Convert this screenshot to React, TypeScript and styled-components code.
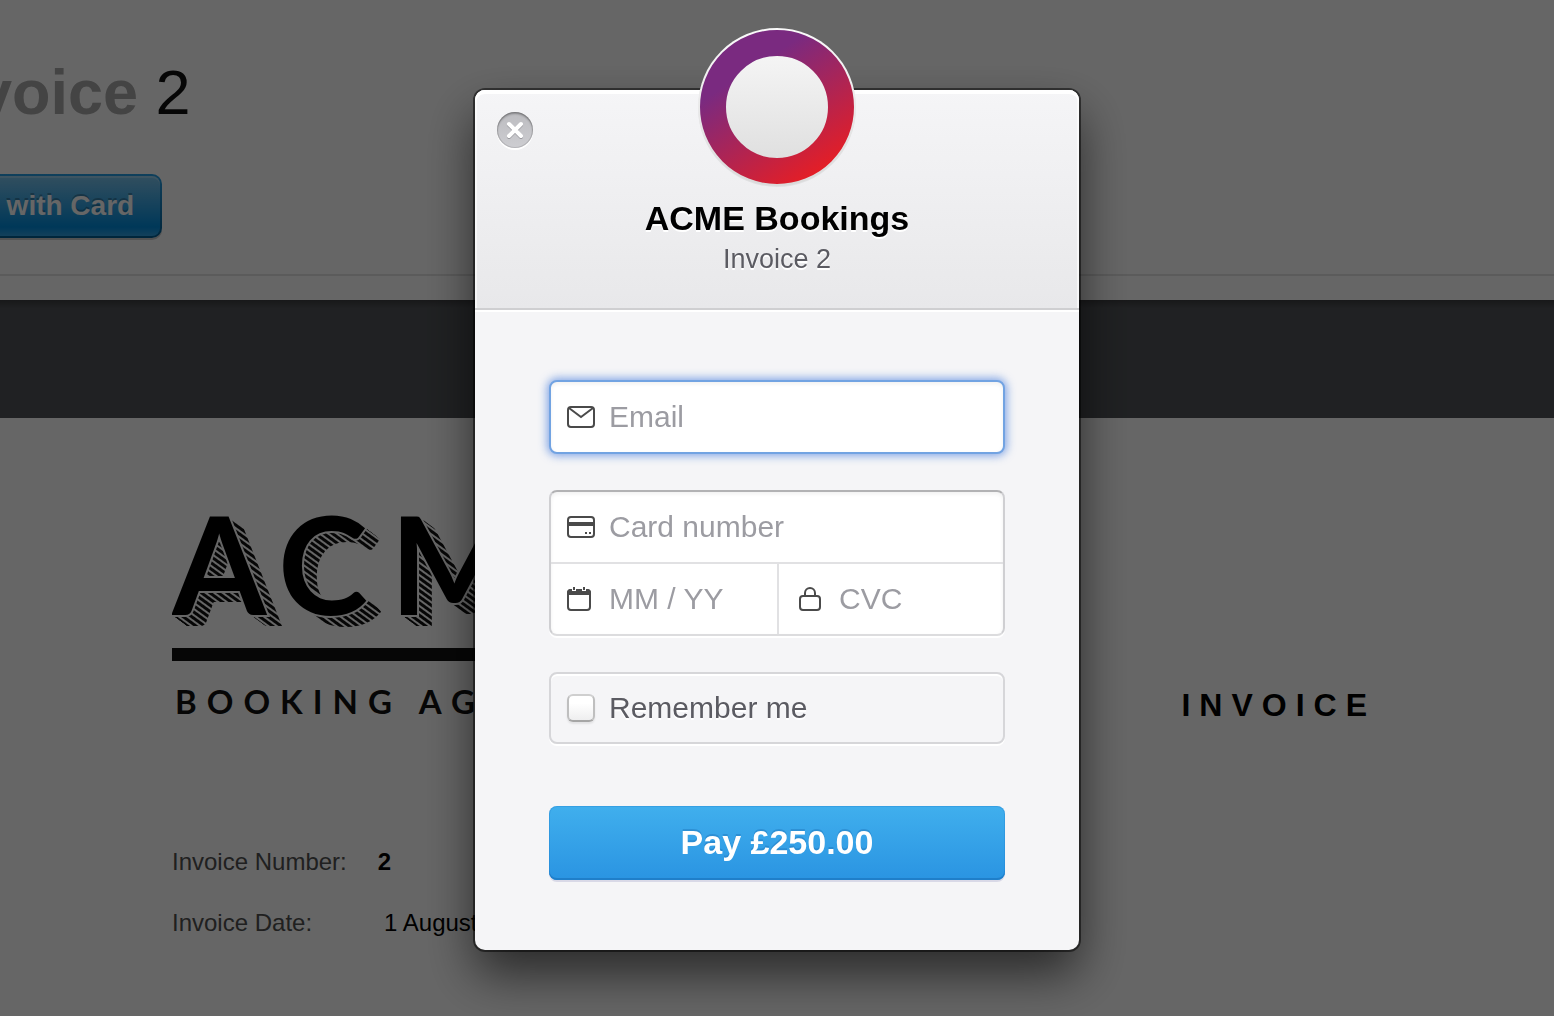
import React from "react";
import styled, { createGlobalStyle } from "styled-components";

const GlobalStyle = createGlobalStyle`
  *, *::before, *::after { box-sizing: border-box; }
  body {
    margin: 0;
    background: #fff;
    font-family: "Liberation Sans", Arial, sans-serif;
    overflow: hidden;
  }
  button, input { font-family: inherit; }
`;

/* ---------- invoice page ---------- */

const Page = styled.main`
  display: flex;
  flex-direction: column;
  min-height: 100vh;
  overflow: hidden;
`;

const PageHeader = styled.header`
  display: flex;
  flex-direction: column;
  align-items: flex-start;
  gap: 46px;
  margin-left: -79px;
  padding: 56px 0 36px;
  border-bottom: 2px solid #e4e4e4;
`;

const PageTitle = styled.h1`
  margin: 0;
  font-size: 63px;
  line-height: 72px;
  font-weight: 400;
  color: #111;
`;

const TitleLabel = styled.strong`
  color: #aaa;
`;

const CardButton = styled.button`
  padding: 2px;
  border: 0;
  border-radius: 10px;
  background: linear-gradient(#28a0e5, #015e94);
  box-shadow: 0 2px 0 rgba(0, 0, 0, 0.2);
`;

const CardButtonFace = styled.span`
  display: block;
  padding: 0 26px;
  border-radius: 8px;
  background: linear-gradient(#7dc5ee, #008cdd 85%, #30a2e4);
  box-shadow: inset 0 2px 0 rgba(255, 255, 255, 0.25);
  color: #fff;
  font-size: 28px;
  line-height: 60px;
  font-weight: 700;
  text-shadow: 0 -2px 0 rgba(0, 0, 0, 0.25);
`;

const Band = styled.div`
  height: 118px;
  margin-top: 24px;
  background: linear-gradient(#3c3d40, #505357 8px);
`;

const Document = styled.section`
  padding: 96px 178px 0 172px;
`;

const DocumentTop = styled.div`
  display: flex;
  justify-content: space-between;
  align-items: flex-end;
`;

const CompanyLogo = styled.svg`
  display: block;
  flex: none;
`;

const DocumentTitle = styled.h2`
  margin: 0;
  font-size: 32px;
  line-height: 26px;
  font-weight: 700;
  letter-spacing: 9px;
  color: #000;
`;

const Details = styled.dl`
  display: grid;
  gap: 33px;
  margin: 130px 0 0;
  font-size: 24px;
  line-height: 28px;
`;

const DetailRow = styled.div<{ $gap: number }>`
  display: flex;
  gap: ${(p) => p.$gap}px;
`;

const DetailLabel = styled.dt`
  color: #505050;
`;

const DetailValue = styled.dd<{ $bold?: boolean }>`
  margin: 0;
  color: #000;
  font-weight: ${(p) => (p.$bold ? 700 : 400)};
`;

/* ---------- checkout dialog ---------- */

const Overlay = styled.div`
  position: fixed;
  inset: 0;
  display: flex;
  justify-content: center;
  align-items: flex-start;
  padding-top: 90px;
  background: rgba(0, 0, 0, 0.6);
`;

const Dialog = styled.section`
  position: relative;
  width: 604px;
  max-width: 100%;
  border-radius: 10px;
  background: #f5f5f7;
  box-shadow: 0 0 0 2px rgba(0, 0, 0, 0.5), 0 24px 50px rgba(0, 0, 0, 0.6);
`;

const DialogHeader = styled.header`
  display: flex;
  flex-direction: column;
  align-items: center;
  padding: 108px 24px 28px;
  border-radius: 10px 10px 0 0;
  border-bottom: 2px solid #cfcfd1;
  background: linear-gradient(#f5f5f7, #e8e8ea);
  box-shadow: inset 0 4px 0 #fff, inset 2px 0 0 rgba(255, 255, 255, 0.6),
    inset -2px 0 0 rgba(255, 255, 255, 0.6), 0 2px 0 #fff;
`;

const BrandMark = styled.svg`
  position: absolute;
  top: -62px;
  left: 50%;
  margin-left: -79px;
`;

const CloseButton = styled.button`
  position: absolute;
  top: 22px;
  left: 22px;
  display: grid;
  place-items: center;
  width: 36px;
  height: 36px;
  padding: 0;
  border: 0;
  border-radius: 50%;
  background: linear-gradient(#bcbcc0, #cdcdd1);
  box-shadow: inset 0 2px 2px rgba(0, 0, 0, 0.28),
    inset 0 0 0 1px rgba(0, 0, 0, 0.12), 0 2px 0 #fff;
`;

const MerchantName = styled.h2`
  margin: 0;
  font-size: 34px;
  line-height: 40px;
  font-weight: 700;
  color: #000;
  text-shadow: 0 2px 0 #fff;
`;

const Purchase = styled.p`
  margin: 0;
  font-size: 27px;
  line-height: 42px;
  color: #5b5b62;
  text-shadow: 0 2px 0 #fff;
`;

const Form = styled.form`
  display: flex;
  flex-direction: column;
  gap: 36px;
  padding: 70px 74px;
`;

const Field = styled.label`
  display: flex;
  align-items: center;
  min-width: 0;
  height: 70px;
  padding-left: 16px;
`;

const IconSlot = styled.span<{ $width: number }>`
  display: flex;
  flex: none;
  width: ${(p) => p.$width}px;
`;

const TextInput = styled.input`
  flex: 1;
  min-width: 0;
  height: 66px;
  padding: 0;
  border: 0;
  outline: 0;
  background: transparent;
  color: #333;
  font-size: 30px;

  &::placeholder {
    color: #9c9ca2;
    opacity: 1;
  }
`;

const FocusedBox = styled.div`
  border: 2px solid #72a3e2;
  border-radius: 8px;
  background: #fff;
  box-shadow: 0 0 8px 2px rgba(70, 125, 220, 0.65),
    inset 0 2px 4px rgba(0, 0, 0, 0.06);
`;

const CardBox = styled.div`
  border: 2px solid;
  border-color: #b2b2b4 #cfcfd2 #dcdcde;
  border-radius: 8px;
  background: #fff;
  box-shadow: 0 2px 0 #fff, inset 0 2px 4px rgba(0, 0, 0, 0.06);
`;

const CardRow = styled.div`
  display: grid;
  grid-auto-flow: column;
  grid-auto-columns: minmax(0, 1fr);

  & + & {
    border-top: 2px solid #e1e1e3;
  }

  ${Field} + ${Field} {
    border-left: 2px solid #e1e1e3;
    padding-left: 20px;
  }
`;

const RememberBox = styled.label`
  display: flex;
  align-items: center;
  gap: 14px;
  height: 72px;
  padding-left: 16px;
  border: 2px solid #d6d6d9;
  border-radius: 8px;
  box-shadow: inset 0 2px 0 #fff, 0 2px 0 #fff;
  color: #5b5b62;
  font-size: 30px;
  text-shadow: 0 2px 0 #fff;
`;

const Checkbox = styled.input`
  appearance: none;
  width: 28px;
  height: 28px;
  margin: 0;
  border: 2px solid;
  border-color: #cfcfcf #bfbfbf #a6a6a6;
  border-radius: 6px;
  background: linear-gradient(#fff 30%, #eeeeef);
  box-shadow: 0 2px 2px rgba(0, 0, 0, 0.08);
`;

const PayButton = styled.button`
  height: 74px;
  margin-top: 26px;
  padding: 0 0 2px;
  border: 0;
  border-radius: 8px;
  background: linear-gradient(#40afed, #2a94e2);
  box-shadow: inset 0 -2px 0 #1f7fca, inset 0 0 0 1px rgba(30, 125, 205, 0.3),
    0 2px 0 rgba(60, 60, 140, 0.15);
  color: #fff;
  font-size: 34px;
  font-weight: 700;
  text-shadow: 0 -2px 0 rgba(0, 60, 130, 0.2);
`;

/* ---------- drawings ---------- */

/* Steps of the hatched drop behind the ACME letters. */
const DROP = [1, 2, 3, 4, 5, 6, 7, 8, 9, 10, 11];

const Logo = () => (
  <CompanyLogo width="420" height="204" viewBox="0 0 420 204" role="img" aria-label="ACME Booking Agency">
    <defs>
      <pattern id="hatch" width="5" height="5" patternUnits="userSpaceOnUse" patternTransform="rotate(36)">
        <rect width="5" height="3" fill="#111" />
      </pattern>
      <mask id="drop" maskUnits="userSpaceOnUse" x="0" y="0" width="420" height="130">
        <g fill="#fff">
          {DROP.map((n) => (
            <use key={n} href="#acme" x={n * 1.35} y={n} />
          ))}
        </g>
        <use href="#acme" fill="#000" stroke="#000" strokeWidth="4" />
      </mask>
    </defs>
    <rect width="420" height="130" fill="url(#hatch)" mask="url(#drop)" />
    <text
      id="acme"
      x="0 106 218 340"
      y="101"
      fontFamily="Lato, sans-serif"
      fontWeight="700"
      fontSize="136"
    >
      ACME
    </text>
    <rect y="134" width="420" height="13" fill="#111" />
    <text x="3" y="200" fill="#111" fontFamily="Lato, sans-serif" fontWeight="700" fontSize="33" letterSpacing="10">
      BOOKING AGENCY
    </text>
  </CompanyLogo>
);

const Ring = () => (
  <BrandMark width="158" height="160" viewBox="0 0 158 160" aria-hidden="true">
    <defs>
      <linearGradient id="ring" gradientUnits="userSpaceOnUse" x1="43" y1="31" x2="118" y2="146">
        <stop offset="0.1" stopColor="#7a2a80" />
        <stop offset="1" stopColor="#e41e26" />
      </linearGradient>
      <linearGradient id="plate" x1="0" y1="0" x2="0" y2="1">
        <stop offset="0" stopColor="#fafafa" />
        <stop offset="1" stopColor="#dadada" />
      </linearGradient>
    </defs>
    <circle cx="79" cy="80" r="79" fill="#000" fillOpacity="0.06" />
    <circle cx="79" cy="79" r="79" fill="url(#plate)" />
    <circle cx="79" cy="79" r="64" fill="none" stroke="url(#ring)" strokeWidth="26" />
  </BrandMark>
);

const CloseIcon = () => (
  <svg width="20" height="20" viewBox="0 0 20 20" aria-hidden="true">
    <path d="M4 5l12 12M16 5L4 17" stroke="#9a9a9f" strokeWidth="4" strokeLinecap="round" />
    <path d="M4 4l12 12M16 4L4 16" stroke="#fff" strokeWidth="4" strokeLinecap="round" />
  </svg>
);

const INK = "#4a4a4a";

type LineIconProps = { width: number; height: number; children: React.ReactNode };

const LineIcon = ({ width, height, children }: LineIconProps) => (
  <svg
    width={width}
    height={height}
    viewBox={`0 0 ${width} ${height}`}
    fill="none"
    stroke={INK}
    strokeWidth="2"
    aria-hidden="true"
  >
    {children}
  </svg>
);

const MailIcon = () => (
  <LineIcon width={28} height={22}>
    <rect x="1" y="1" width="26" height="20" rx="3" />
    <path d="M2 2l12 9 12-9" />
  </LineIcon>
);

const CardIcon = () => (
  <LineIcon width={28} height={22}>
    <rect x="1" y="1" width="26" height="20" rx="3" />
    <path d="M1 8h26" strokeWidth="4" />
    <path d="M18 17h2M22 17h2" />
  </LineIcon>
);

const CalendarIcon = () => (
  <LineIcon width={24} height={24}>
    <rect x="1" y="3" width="22" height="20" rx="3" />
    <path d="M0 8V6a4 4 0 0 1 4-4h16a4 4 0 0 1 4 4v2z" fill={INK} stroke="none" />
    <path d="M7 0v4M17 0v4" stroke="#fff" strokeWidth="4" />
    <path d="M7 0v3M17 0v3" />
  </LineIcon>
);

const LockIcon = () => (
  <LineIcon width={22} height={24}>
    <rect x="1" y="9" width="20" height="14" rx="3" />
    <path d="M6 9V6a5 5 0 0 1 10 0v3" />
  </LineIcon>
);

type FieldProps = {
  label: string;
  icon: React.ReactNode;
  slot?: number;
  type?: string;
};

const IconField = ({ label, icon, slot = 42, type = "text" }: FieldProps) => (
  <Field>
    <IconSlot $width={slot}>{icon}</IconSlot>
    <TextInput type={type} placeholder={label} aria-label={label} />
  </Field>
);

export default function App() {
  return (
    <>
      <GlobalStyle />
      <Page>
        <PageHeader>
          <PageTitle>
            <TitleLabel>Invoice</TitleLabel> 2
          </PageTitle>
          <CardButton type="button">
            <CardButtonFace>Pay with Card</CardButtonFace>
          </CardButton>
        </PageHeader>
        <Band />
        <Document>
          <DocumentTop>
            <Logo />
            <DocumentTitle>INVOICE</DocumentTitle>
          </DocumentTop>
          <Details>
            <DetailRow $gap={31}>
              <DetailLabel>Invoice Number:</DetailLabel>
              <DetailValue $bold>2</DetailValue>
            </DetailRow>
            <DetailRow $gap={72}>
              <DetailLabel>Invoice Date:</DetailLabel>
              <DetailValue>1 August</DetailValue>
            </DetailRow>
          </Details>
        </Document>
      </Page>

      <Overlay>
        <Dialog role="dialog" aria-modal="true" aria-labelledby="merchant">
          <DialogHeader>
            <MerchantName id="merchant">ACME Bookings</MerchantName>
            <Purchase>Invoice 2</Purchase>
          </DialogHeader>
          <Ring />
          <CloseButton type="button" aria-label="Close">
            <CloseIcon />
          </CloseButton>
          <Form onSubmit={(e) => e.preventDefault()}>
            <FocusedBox>
              <IconField label="Email" icon={<MailIcon />} type="email" />
            </FocusedBox>
            <CardBox>
              <CardRow>
                <IconField label="Card number" icon={<CardIcon />} />
              </CardRow>
              <CardRow>
                <IconField label="MM / YY" icon={<CalendarIcon />} />
                <IconField label="CVC" icon={<LockIcon />} slot={40} />
              </CardRow>
            </CardBox>
            <RememberBox>
              <Checkbox type="checkbox" />
              Remember me
            </RememberBox>
            <PayButton type="submit">Pay £250.00</PayButton>
          </Form>
        </Dialog>
      </Overlay>
    </>
  );
}
